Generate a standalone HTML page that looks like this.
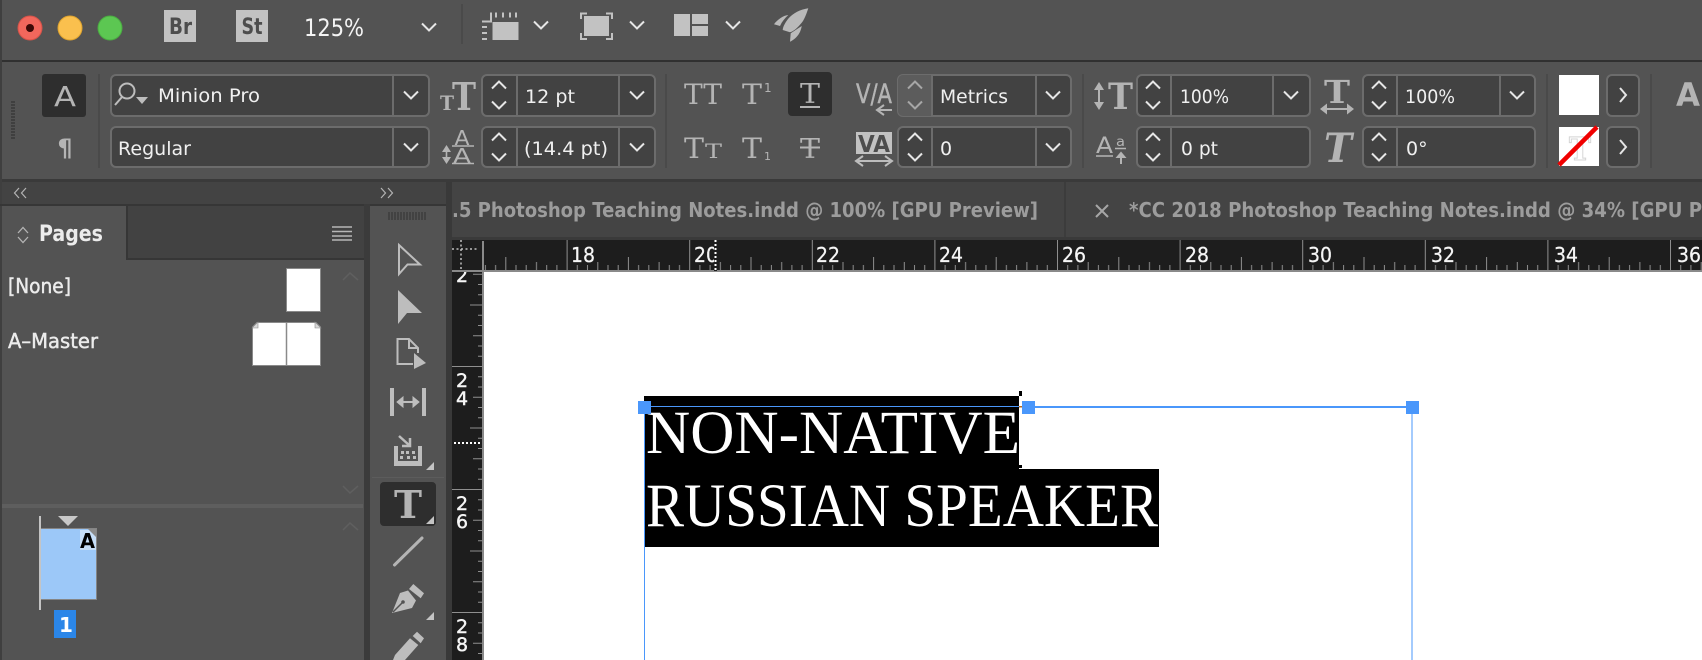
<!DOCTYPE html>
<html><head><meta charset="utf-8"><title>InDesign</title>
<style>
html,body{margin:0;padding:0;background:#535353;width:1702px;height:660px;overflow:hidden}
svg{display:block;position:absolute;left:0;top:0}
text{font-family:"DejaVu Sans","Liberation Sans",sans-serif}
.f{font-size:19px;fill:#f0f0f0}
.s{font-family:"DejaVu Serif","Liberation Serif",serif;fill:#b4b4b4}
.a{font-family:"DejaVu Sans","Liberation Sans",sans-serif;fill:#b4b4b4}
.tab{font-size:20px;font-weight:bold;fill:#9c9c9c}
.rl{font-size:20.5px;fill:#f6f6f6;stroke:#f6f6f6;stroke-width:.25}
.vl{font-size:19px;fill:#f6f6f6;text-anchor:middle;stroke:#f6f6f6;stroke-width:.4}
.box{fill:#424242;stroke:#6c6c6c;stroke-width:2}
.div{stroke:#6c6c6c;stroke-width:2}
.sep{stroke:#4a4a4a;stroke-width:2}
</style></head><body>
<svg width="1702" height="660" viewBox="0 0 1702 660" xmlns="http://www.w3.org/2000/svg">
<defs>
<path id="ch" d="M-7-3.5L0 3.5L7-3.5" fill="none" stroke="#e6e6e6" stroke-width="2"/>
<path id="up" d="M-7 3.5L0-3.5L7 3.5" fill="none" stroke="#e6e6e6" stroke-width="2"/>
<path id="dn" d="M-7-3.5L0 3.5L7-3.5" fill="none" stroke="#e6e6e6" stroke-width="2"/>
<path id="tri" d="M8 0V8H0Z" fill="#c4c4c4"/>
<pattern id="hr" patternUnits="userSpaceOnUse" width="122.6" height="30" patternTransform="translate(566.6,240)">
<path fill="none" stroke="#8f8f8f" stroke-width="1" d="M.5 0V30M10.7 25V30M20.9 25V30M31.2 22V30M41.4 25V30M51.6 25V30M61.8 17V30M72 25V30M82.2 25V30M92.5 22V30M102.7 25V30M112.9 25V30"/>
</pattern>
<pattern id="vr" patternUnits="userSpaceOnUse" width="30" height="123" patternTransform="translate(452,243)">
<path fill="none" stroke="#8f8f8f" stroke-width="1" d="M0 .5H30M26 10.7H30M26 21H30M21 31.2H30M26 41.5H30M26 51.7H30M18 62H30M26 72.2H30M26 82.5H30M21 92.7H30M26 103H30M26 113.2H30"/>
</pattern>
</defs>

<!-- backgrounds -->
<rect width="1702" height="660" fill="#535353"/>
<rect y="60" width="1702" height="2" fill="#303030"/>
<rect y="179" width="1702" height="3" fill="#3a3a3a"/>
<rect x="0" y="0" width="2" height="660" fill="#3f3f3f"/>

<!-- title bar -->
<circle cx="30" cy="28" r="12" fill="#f2675c" stroke="#d65349"/><circle cx="30" cy="28" r="4" fill="#3d0a07"/>
<circle cx="70" cy="28" r="12" fill="#fac04e" stroke="#dfa42f"/>
<circle cx="110" cy="28" r="12" fill="#5cc752" stroke="#4bad42"/>
<rect x="164" y="10" width="32" height="32" fill="#c2c2c2"/>
<text x="169" y="34" font-size="22" font-weight="bold" fill="#4d4d4d" textLength="23" lengthAdjust="spacingAndGlyphs">Br</text>
<rect x="236" y="10" width="32" height="32" fill="#c2c2c2"/>
<text x="241.500" y="34" font-size="22" font-weight="bold" fill="#4d4d4d" textLength="21" lengthAdjust="spacingAndGlyphs">St</text>
<text x="304" y="36" font-size="24" fill="#f4f4f4" textLength="60" lengthAdjust="spacingAndGlyphs">125%</text>
<use href="#ch" x="429" y="27"/>
<line x1="462" y1="4" x2="462" y2="44" stroke="#4a4a4a" stroke-width="2"/>
<!-- layout icon -->
<rect x="492.500" y="22" width="26" height="18" fill="#c2c2c2"/>
<path d="M482 21.500H491V12.500M496 12.500v5M503 12.500v5M510 12.500v5M516 12.500v5M482 27h5M482 33h5M482 39h5" fill="none" stroke="#c2c2c2" stroke-width="2"/>
<use href="#ch" x="541" y="25"/>
<!-- screen mode -->
<rect x="584" y="16" width="25" height="20" fill="#c2c2c2"/>
<path d="M587 13.500H581V19M606 13.500H612V19M581 33V39H587M612 33V39H606" fill="none" stroke="#c2c2c2" stroke-width="2"/>
<use href="#ch" x="637" y="25"/>
<!-- arrange -->
<path d="M674 14h16v22h-16zM692 14h16v10h-16zM692 26h16v10h-16z" fill="#c2c2c2"/>
<use href="#ch" x="733" y="25"/>
<!-- rocket -->
<path d="M808.300 8.300C800 9.500 793 13.300 788 19C785 23 783 26.500 782.700 30L790 32.300C795 31 800 25 803 21C805.500 17 807 12 808.300 8.300Z" fill="#b9b9b9"/>
<path d="M774 24.300C777 20 783 15.500 788.300 15C785 18 782 21.500 780 26Z" fill="#b9b9b9"/>
<path d="M790 41.700L790.700 33.300L801.700 26C801 31 798 38 790 41.700Z" fill="#b9b9b9"/>

<!-- control bar -->
<path d="M11 102h4M11 105h4M11 108h4M11 111h4M11 114h4M11 117h4M11 120h4M11 123h4M11 126h4M11 129h4M11 132h4M11 135h4M11 138h4" stroke="#3f3f3f" stroke-width="2"/>
<rect x="42" y="74" width="44" height="43" rx="3" fill="#2e2e2e"/>
<text x="54" y="106" font-size="28" class="a" textLength="22" lengthAdjust="spacingAndGlyphs">A</text>
<text x="65" y="156" text-anchor="middle" font-size="24" font-weight="bold" class="a">¶</text>
<line x1="99" y1="74" x2="99" y2="168" class="sep"/>

<rect x="111" y="75" width="318" height="41" rx="5" class="box"/><line x1="393" y1="75" x2="393" y2="116" class="div"/>
<circle cx="127" cy="91" r="7.500" fill="none" stroke="#bdbdbd" stroke-width="2"/><path d="M122 97L115 105" stroke="#bdbdbd" stroke-width="2"/><path d="M136 97h12l-6 7z" fill="#bdbdbd"/>
<text x="158" y="102" class="f" textLength="102" lengthAdjust="spacingAndGlyphs">Minion Pro</text>
<use href="#ch" x="411" y="95"/>
<rect x="111" y="127" width="318" height="40" rx="5" class="box"/><line x1="393" y1="127" x2="393" y2="167" class="div"/>
<text x="118" y="155" class="f" textLength="73" lengthAdjust="spacingAndGlyphs">Regular</text>
<use href="#ch" x="411" y="147"/>

<text x="440" y="110" class="s" font-size="20" font-weight="bold" textLength="14" lengthAdjust="spacingAndGlyphs">T</text>
<text x="452" y="110" class="s" font-size="38" font-weight="bold" textLength="24" lengthAdjust="spacingAndGlyphs">T</text>
<text x="462" y="145" class="a" font-size="20" text-anchor="middle" textLength="15" lengthAdjust="spacingAndGlyphs">A</text>
<text x="462" y="163" class="a" font-size="20" text-anchor="middle" textLength="18" lengthAdjust="spacingAndGlyphs">A</text>
<path d="M452 146H474M452 163.500H474" stroke="#b4b4b4" stroke-width="1.500"/>
<path d="M446.500 145L442 152H451ZM446.500 164L442 157H451Z" fill="#b4b4b4"/><rect x="445.700" y="150" width="1.600" height="9" fill="#b4b4b4"/>

<rect x="482" y="75" width="173" height="41" rx="5" class="box"/><path d="M517 75v41M619 75v41" class="div"/>
<use href="#up" x="499" y="85"/><use href="#dn" x="499" y="105"/>
<text x="525" y="103" class="f" textLength="50" lengthAdjust="spacingAndGlyphs">12 pt</text>
<use href="#ch" x="637" y="95"/>
<rect x="482" y="127" width="173" height="40" rx="5" class="box"/><path d="M517 127v40M619 127v40" class="div"/>
<use href="#up" x="499" y="137"/><use href="#dn" x="499" y="157"/>
<text x="524" y="155" class="f" textLength="84" lengthAdjust="spacingAndGlyphs">(14.4 pt)</text>
<use href="#ch" x="637" y="147"/>
<line x1="666" y1="74" x2="666" y2="168" class="sep"/>

<text x="684" y="104" class="s" font-size="28" textLength="38" lengthAdjust="spacingAndGlyphs">TT</text>
<text x="742" y="104" class="s" font-size="28" textLength="20" lengthAdjust="spacingAndGlyphs">T</text><text x="764" y="92" class="a" font-size="12">1</text>
<rect x="788" y="72" width="44" height="44" rx="4" fill="#2e2e2e"/>
<text x="800" y="103" class="s" font-size="27" textLength="20" lengthAdjust="spacingAndGlyphs">T</text><rect x="800" y="106" width="20" height="2" fill="#b4b4b4"/>
<text x="684" y="158" class="s" font-size="28" textLength="20" lengthAdjust="spacingAndGlyphs">T</text><text x="705" y="158" class="s" font-size="20" textLength="17" lengthAdjust="spacingAndGlyphs">T</text>
<text x="742" y="158" class="s" font-size="28" textLength="20" lengthAdjust="spacingAndGlyphs">T</text><text x="764" y="160" class="a" font-size="11">1</text>
<text x="800" y="158" class="s" font-size="27" textLength="20" lengthAdjust="spacingAndGlyphs">T</text><rect x="800" y="146.500" width="20" height="2" fill="#b4b4b4"/>

<!-- V/A -->
<text x="856" y="103" class="a" font-size="27" stroke="#b4b4b4" stroke-width=".5" textLength="36" lengthAdjust="spacingAndGlyphs">V/A</text>
<path d="M892 110H878M884 105L877 110L884 115" fill="none" stroke="#b4b4b4" stroke-width="2"/>
<rect x="898" y="75" width="173" height="41" rx="5" class="box"/>
<path d="M932 75H903a5 5 0 0 0-5 5v31a5 5 0 0 0 5 5H932Z" fill="#5c5c5c"/>
<path d="M932 75v41M1036 75v41" class="div"/>
<use href="#up" x="915" y="85" style="opacity:.55"/><use href="#dn" x="915" y="105" style="opacity:.55"/>
<text x="940" y="103" class="f" textLength="68" lengthAdjust="spacingAndGlyphs">Metrics</text>
<use href="#ch" x="1053" y="95"/>
<rect x="856" y="132" width="36" height="22" fill="#c2c2c2"/>
<text x="858" y="152" font-size="23" font-weight="bold" fill="#4d4d4d" textLength="32" lengthAdjust="spacingAndGlyphs">VA</text>
<path d="M858 161H890" stroke="#bdbdbd" stroke-width="2"/><path d="M863 156L856 161L863 166M885 156L892 161L885 166" fill="none" stroke="#bdbdbd" stroke-width="2"/>
<rect x="898" y="127" width="173" height="40" rx="5" class="box"/><path d="M932 127v40M1036 127v40" class="div"/>
<use href="#up" x="915" y="137"/><use href="#dn" x="915" y="157"/>
<text x="940" y="155" class="f">0</text>
<use href="#ch" x="1053" y="147"/>
<line x1="1083" y1="74" x2="1083" y2="168" class="sep"/>

<path d="M1099 82L1094 90H1104ZM1099 110L1094 102H1104Z" fill="#b4b4b4"/><rect x="1098" y="88" width="2" height="16" fill="#b4b4b4"/>
<text x="1108" y="109" class="s" font-size="36" font-weight="bold" textLength="25" lengthAdjust="spacingAndGlyphs">T</text>
<rect x="1137" y="75" width="173" height="41" rx="5" class="box"/><path d="M1171 75v41M1273 75v41" class="div"/>
<use href="#up" x="1153" y="85"/><use href="#dn" x="1153" y="105"/>
<text x="1180" y="103" class="f" textLength="49" lengthAdjust="spacingAndGlyphs">100%</text>
<use href="#ch" x="1291" y="95"/>
<text x="1096" y="153" class="a" font-size="22" textLength="17" lengthAdjust="spacingAndGlyphs">A</text><text x="1116" y="146" class="a" font-size="13" textLength="9" lengthAdjust="spacingAndGlyphs">a</text>
<path d="M1096 156H1113M1115 148.500H1126" stroke="#b4b4b4" stroke-width="1.500" fill="none"/>
<path d="M1121 164V154" stroke="#b4b4b4" stroke-width="2"/><path d="M1115.500 158L1121 151.500L1126.500 158Z" fill="#b4b4b4"/>
<rect x="1137" y="127" width="173" height="40" rx="5" class="box"/><path d="M1171 127v40" class="div"/>
<use href="#up" x="1153" y="137"/><use href="#dn" x="1153" y="157"/>
<text x="1181" y="155" class="f" textLength="37" lengthAdjust="spacingAndGlyphs">0 pt</text>

<text x="1324" y="103" class="s" font-size="32" font-weight="bold" textLength="26" lengthAdjust="spacingAndGlyphs">T</text>
<path d="M1322 109H1352" stroke="#b4b4b4" stroke-width="2"/><path d="M1327 103.500L1320 109L1327 114.500ZM1347 103.500L1354 109L1347 114.500Z" fill="#b4b4b4"/>
<rect x="1363" y="75" width="172" height="41" rx="5" class="box"/><path d="M1397 75v41M1500 75v41" class="div"/>
<use href="#up" x="1379" y="85"/><use href="#dn" x="1379" y="105"/>
<text x="1405" y="103" class="f" textLength="50" lengthAdjust="spacingAndGlyphs">100%</text>
<use href="#ch" x="1517" y="95"/>
<text x="1324" y="162" class="s" font-size="40" font-weight="bold" font-style="italic" textLength="28" lengthAdjust="spacingAndGlyphs">T</text>
<rect x="1363" y="127" width="172" height="40" rx="5" class="box"/><path d="M1397 127v40" class="div"/>
<use href="#up" x="1379" y="137"/><use href="#dn" x="1379" y="157"/>
<text x="1406" y="155" class="f">0°</text>
<line x1="1547" y1="74" x2="1547" y2="168" class="sep"/>
<rect x="1559" y="75" width="40" height="40" fill="#fff"/>
<rect x="1559" y="127" width="40" height="39" fill="#fff"/>
<text x="1569" y="160" class="s" font-size="32" textLength="22" lengthAdjust="spacingAndGlyphs" style="fill:none;stroke:#d4d4d4;stroke-width:1;font-weight:bold">T</text>
<path d="M1559 165L1597 127" stroke="#f00000" stroke-width="4.500"/>
<rect x="1607" y="75" width="32" height="41" rx="5" class="box"/><path d="M1620 88L1626 95L1620 102" fill="none" stroke="#e6e6e6" stroke-width="2"/>
<rect x="1607" y="127" width="32" height="40" rx="5" class="box"/><path d="M1620 140L1626 147L1620 154" fill="none" stroke="#e6e6e6" stroke-width="2"/>
<line x1="1651" y1="74" x2="1651" y2="168" class="sep"/>
<text x="1676" y="106" class="a" font-size="32" font-weight="bold" textLength="24" lengthAdjust="spacingAndGlyphs">A</text>

<!-- panel header / tabs -->
<rect x="2" y="182" width="445" height="22" fill="#434343"/>
<rect x="0" y="204" width="447" height="2" fill="#363636"/>
<path d="M19 188L14.500 193L19 198M26 188L21.500 193L26 198" fill="none" stroke="#b4b4b4" stroke-width="1.200"/>
<path d="M381 188L385.500 193L381 198M388 188L392.500 193L388 198" fill="none" stroke="#b4b4b4" stroke-width="1.200"/>
<rect x="446" y="182" width="6" height="478" fill="#393939"/>
<rect x="452" y="182" width="1250" height="58" fill="#444444"/>
<rect x="452" y="237" width="1250" height="3" fill="#3a3a3a"/>
<rect x="1064" y="182" width="2" height="55" fill="#3c3c3c"/>
<text x="452" y="217" class="tab" textLength="586" lengthAdjust="spacingAndGlyphs">.5 Photoshop Teaching Notes.indd @ 100% [GPU Preview]</text>
<path d="M1096 205L1108 217M1108 205L1096 217" stroke="#a6a6a6" stroke-width="2"/>
<text x="1129" y="217" class="tab" textLength="573" lengthAdjust="spacingAndGlyphs">*CC 2018 Photoshop Teaching Notes.indd @ 34% [GPU P</text>

<!-- pages panel -->
<rect x="2" y="206" width="362" height="454" fill="#535353"/>
<rect x="127" y="206" width="237" height="52" fill="#424242"/>
<rect x="126" y="204" width="2" height="56" fill="#363636"/>
<rect x="126" y="258" width="238" height="2" fill="#363636"/>
<rect x="364" y="204" width="6" height="456" fill="#3b3b3b"/>
<path d="M18 233L23 227.500L28 233M18 237L23 242.500L28 237" fill="none" stroke="#b4b4b4" stroke-width="1.300"/>
<text x="39" y="241" font-size="22" font-weight="bold" fill="#ececec" textLength="64" lengthAdjust="spacingAndGlyphs">Pages</text>
<path d="M332 227h20M332 231.500h20M332 236h20M332 240h20" stroke="#b6b6b6" stroke-width="1.500"/>
<text x="8" y="293" font-size="20" fill="#ececec" stroke="#ececec" stroke-width=".45" textLength="63" lengthAdjust="spacingAndGlyphs">[None]</text>
<text x="8" y="348" font-size="20" fill="#ececec" stroke="#ececec" stroke-width=".45" textLength="90" lengthAdjust="spacingAndGlyphs">A–Master</text>
<rect x="286.500" y="268.500" width="34" height="43" fill="#fff" stroke="#8a8a8a"/>
<path d="M257 322.500H316L320.500 327V365.500H252.500V327Z" fill="#fff" stroke="#8a8a8a"/>
<path d="M286.500 322.500V365.500" stroke="#8a8a8a" stroke-width="1.500"/>
<path d="M252 328L258 322V328ZM321 328L315 322V328Z" fill="#d8d8d8" stroke="#8a8a8a" stroke-width=".6"/>
<path d="M343 280L350 273L358 280" fill="none" stroke="#5f5f5f" stroke-width="1.500"/>
<path d="M343 486L350 493L358 486" fill="none" stroke="#5f5f5f" stroke-width="1.500"/>
<path d="M343 530L350 523L358 530" fill="none" stroke="#5f5f5f" stroke-width="1.500"/>
<rect x="2" y="504" width="361" height="4" fill="#5e5e5e"/>
<rect x="40.500" y="528.500" width="56" height="71" fill="#9cc8f8" stroke="#858585"/>
<rect x="39" y="516" width="2" height="94" fill="#c4c4c4"/>
<path d="M58 516H78L68 526Z" fill="#c8c8c8"/>
<rect x="80" y="530" width="16" height="20" fill="#c6def8"/>
<path d="M88 529H96V537Z" fill="#8a8a8a"/>
<text x="80" y="548" font-size="20" font-weight="bold" fill="#000" textLength="15" lengthAdjust="spacingAndGlyphs">A</text>
<rect x="54" y="610" width="22" height="28" fill="#2b86e8"/>
<text x="66" y="632" text-anchor="middle" font-size="20" font-weight="bold" fill="#fff">1</text>

<!-- tools panel -->
<rect x="370" y="206" width="76" height="454" fill="#535353"/>
<path d="M389 212v8M392 212v8M395 212v8M398 212v8M401 212v8M404 212v8M407 212v8M410 212v8M413 212v8M416 212v8M419 212v8M422 212v8M425 212v8" stroke="#3c3c3c" stroke-width="1.500"/>
<path d="M399 245L420 264.500H407.500L399 274Z" fill="none" stroke="#bdbdbd" stroke-width="2"/>
<path d="M398 290L422 313H407L398 324Z" fill="#bdbdbd"/>
<path d="M418 353V348L409 339H397.500V364H413" fill="none" stroke="#bdbdbd" stroke-width="2"/><path d="M409 339V348H418" fill="none" stroke="#bdbdbd" stroke-width="2"/>
<path d="M414 353L426 363L414 369Z" fill="#bdbdbd"/>
<rect x="390" y="388" width="4" height="28" fill="#bdbdbd"/><rect x="422" y="388" width="4" height="28" fill="#bdbdbd"/>
<path d="M398 402H418" stroke="#bdbdbd" stroke-width="2"/><path d="M403 397L397 402L403 407ZM413 397L419 402L413 407Z" fill="#bdbdbd" stroke="#bdbdbd"/>
<path d="M394 446H398V461H418V446H422V466H394Z" fill="#bdbdbd"/>
<path d="M401 451h3v3h-3zM406 451h3v3h-3zM412 451h3v3h-3zM400 456h3v3h-3zM407 456h3v3h-3zM413 456h3v3h-3z" fill="#bdbdbd"/>
<path d="M399 436L409 445M410 438V446H402" fill="none" stroke="#bdbdbd" stroke-width="2.500"/>
<use href="#tri" x="426" y="462"/>
<rect x="372" y="477" width="72" height="1" fill="#5c5c5c"/>
<rect x="380" y="482" width="56" height="44" rx="4" fill="#2e2e2e"/>
<text x="394" y="518" class="s" font-size="38" font-weight="bold" textLength="28" lengthAdjust="spacingAndGlyphs">T</text>
<use href="#tri" x="426" y="516"/>
<line x1="394.500" y1="565" x2="422" y2="538" stroke="#b4b4b4" stroke-width="3" stroke-linecap="round"/>
<path d="M392 613L400 593L408 590.500L416 600.500L412 608Z" fill="#bdbdbd"/><path d="M393 612L402 603" stroke="#535353" stroke-width="1.500"/><circle cx="403" cy="602" r="1.800" fill="#535353"/>
<path d="M413.300 584L424 593.300L420.700 598.300L409 589Z" fill="#bdbdbd"/>
<use href="#tri" x="426" y="612"/>
<path d="M417 631.700L424 638.300L420.700 643.300L412.700 636Z" fill="#bdbdbd"/>
<path d="M410 638.300L418.300 645L405 660H393L395 655Z" fill="#bdbdbd"/>

<!-- vertical ruler -->
<rect x="452" y="240" width="32" height="420" fill="#1d1d1d"/>
<rect x="452" y="240" width="30" height="420" fill="url(#vr)"/>
<text x="462" y="282" class="vl">2</text>
<text x="462" y="387" class="vl">2</text><text x="462" y="405" class="vl">4</text>
<text x="462" y="510" class="vl">2</text><text x="462" y="528" class="vl">6</text>
<text x="462" y="633" class="vl">2</text><text x="462" y="651" class="vl">8</text>
<rect x="482" y="240" width="2" height="420" fill="#8a8a8a"/>
<path d="M454 443H482" stroke="#fff" stroke-width="2" stroke-dasharray="2 2"/>

<!-- horizontal ruler -->
<rect x="452" y="240" width="1250" height="30" fill="#1d1d1d"/>
<rect x="484" y="240" width="1218" height="30" fill="url(#hr)"/>
<rect x="452" y="270" width="1250" height="2" fill="#8a8a8a"/>
<text x="571" y="262" class="rl" textLength="24" lengthAdjust="spacingAndGlyphs">18</text>
<text x="694" y="262" class="rl" textLength="24" lengthAdjust="spacingAndGlyphs">20</text>
<text x="816" y="262" class="rl" textLength="24" lengthAdjust="spacingAndGlyphs">22</text>
<text x="939" y="262" class="rl" textLength="24" lengthAdjust="spacingAndGlyphs">24</text>
<text x="1062" y="262" class="rl" textLength="24" lengthAdjust="spacingAndGlyphs">26</text>
<text x="1185" y="262" class="rl" textLength="24" lengthAdjust="spacingAndGlyphs">28</text>
<text x="1308" y="262" class="rl" textLength="24" lengthAdjust="spacingAndGlyphs">30</text>
<text x="1431" y="262" class="rl" textLength="24" lengthAdjust="spacingAndGlyphs">32</text>
<text x="1554" y="262" class="rl" textLength="24" lengthAdjust="spacingAndGlyphs">34</text>
<text x="1677" y="262" class="rl" textLength="24" lengthAdjust="spacingAndGlyphs">36</text>
<rect x="714" y="240" width="3" height="31" fill="#1d1d1d"/>
<path d="M715.500 240V270" stroke="#fff" stroke-width="2" stroke-dasharray="2 2"/>
<!-- ruler corner -->
<rect x="452" y="240" width="31" height="30" fill="#1d1d1d"/>
<path d="M452 249H478M461 240V270" stroke="#c0c0c0" stroke-width="1.500" stroke-dasharray="2 2.500"/>
<rect x="482" y="241" width="2" height="31" fill="#8a8a8a"/>

<!-- page -->
<rect x="484" y="272" width="1218" height="388" fill="#fff"/>
<rect x="644" y="396" width="375" height="73" fill="#000"/>
<rect x="644" y="469" width="515" height="78" fill="#000"/>
<rect x="1019" y="391" width="3" height="5" fill="#000"/>
<rect x="1019" y="465" width="3" height="3" fill="#000"/>
<text x="646" y="453" font-size="61" fill="#fff" style="font-family:'Liberation Serif',serif" textLength="374" lengthAdjust="spacingAndGlyphs">NON-NATIVE</text>
<text x="646" y="526" font-size="61" fill="#fff" style="font-family:'Liberation Serif',serif" textLength="512" lengthAdjust="spacingAndGlyphs">RUSSIAN SPEAKER</text>
<rect x="644" y="406" width="375" height="1" fill="#4a97fb"/>
<rect x="1019" y="406" width="3" height="1.500" fill="#b46a20"/>
<rect x="1035" y="406" width="371" height="2" fill="#4a97fb"/>
<rect x="644" y="414" width="1" height="246" fill="#4a97fb"/>
<rect x="1411.500" y="413" width="1" height="247" fill="#4a97fb"/>
<rect x="638" y="401" width="13" height="13" fill="#4a97fb"/>
<rect x="1022" y="401" width="13" height="13" fill="#4a97fb"/>
<rect x="1406" y="401" width="13" height="13" fill="#4a97fb"/>
</svg>
</body></html>
